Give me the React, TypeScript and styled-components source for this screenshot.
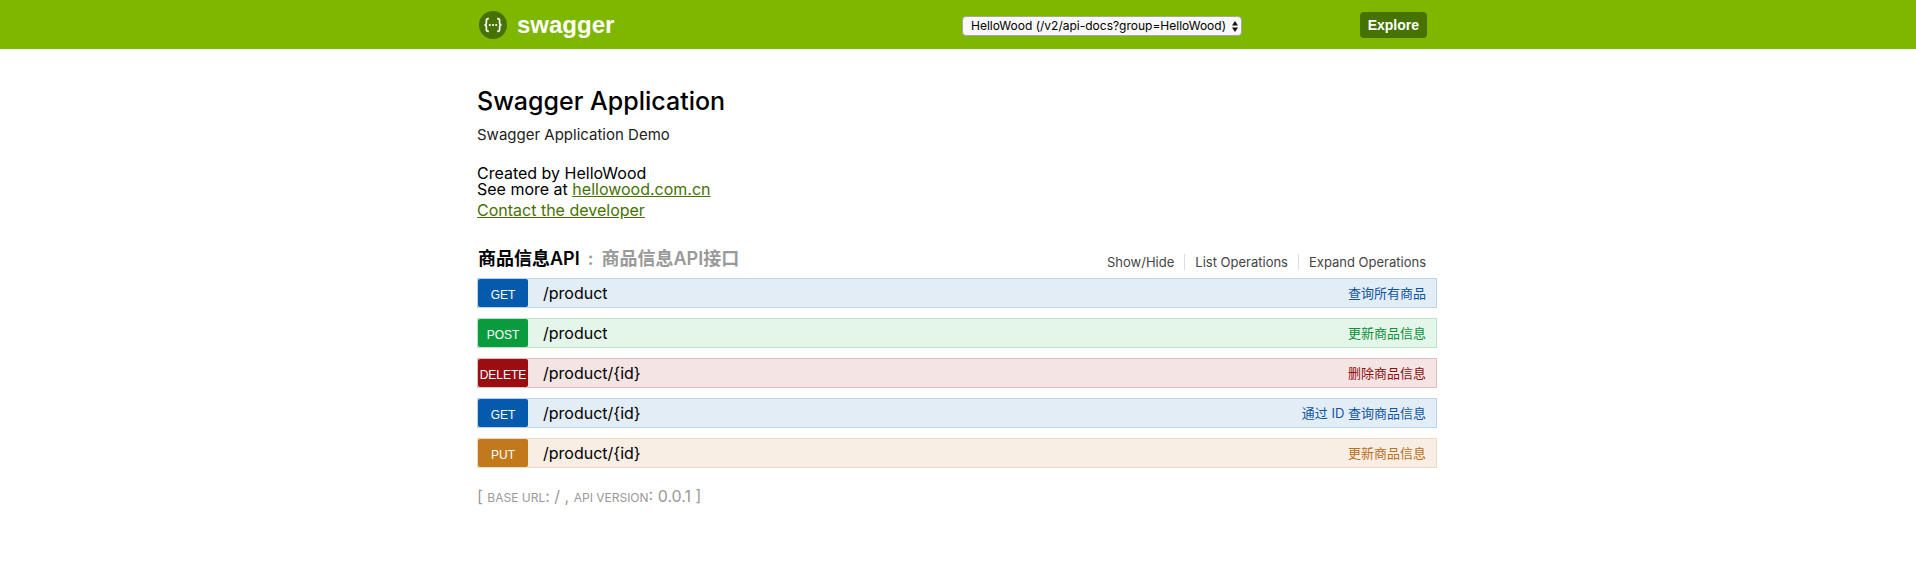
import React from "react";
import styled, { createGlobalStyle } from "styled-components";

const sans = `Inter, "Noto Sans CJK SC", sans-serif`;
const bold = `"Liberation Sans", Arial, sans-serif`;

const GlobalStyle = createGlobalStyle`
  *, *::before, *::after { box-sizing: border-box; }
  body { margin: 0; background: #fff; color: #000; font-family: ${sans}; font-size: 16px; }
  h1, h2, p, ul { margin: 0; padding: 0; }
`;

const Container = styled.div`
  max-width: 962px;
  margin: 0 auto;
  padding-right: 2px;
`;

const Header = styled.header`
  background: #7db700;
`;

const Bar = styled(Container)`
  display: flex;
  align-items: center;
  height: 49px;
`;

const Logo = styled.a`
  display: flex;
  align-items: center;
  gap: 10px;
  padding-left: 2px;
  color: #fff;
  font: bold 24px/28px ${bold};
  text-decoration: none;
`;

const Selector = styled.form`
  display: flex;
  align-items: center;
  justify-content: space-between;
  width: 465px;
  margin-left: auto;
  margin-right: 10px;
`;

const Picker = styled.label`
  position: relative;
  display: block;
  padding-top: 2px;
  svg { position: absolute; right: 4px; top: 7px; pointer-events: none; }
`;

const Select = styled.select`
  display: block;
  appearance: none;
  width: 280px;
  height: 20px;
  padding: 0 8px;
  border: 1px solid #a6a6a6;
  border-radius: 4px;
  background: #f8f8f8;
  color: #000;
  font: 12px/18px ${sans};
`;

const Explore = styled.button`
  height: 26px;
  padding: 0 8px;
  border: 0;
  border-radius: 4px;
  background: #457200;
  color: #fff;
  font: bold 14px/26px ${bold};
`;

const Info = styled.section`
  padding-top: 37px;
`;

const Title = styled.h1`
  font-size: 25px;
  font-weight: 500;
  line-height: 30px;
`;

const Description = styled.p`
  margin-top: 9px;
  color: #222;
  font-size: 15px;
  line-height: 20px;
`;

const Credits = styled.div`
  margin-top: 20px;
  line-height: 16px;
`;

const Link = styled.a`
  color: #457200;
`;

const Contact = styled.p`
  margin-top: 5px;
`;

const ResourceHead = styled.div`
  display: flex;
  align-items: flex-end;
  justify-content: space-between;
  margin-top: 30px;
  padding: 0 11px 8px 1px;
`;

const ResourceTitle = styled.h2`
  display: flex;
  gap: 8px;
  font-size: 18px;
  font-weight: 600;
  line-height: 22px;
  span { color: #999; }
`;

const Options = styled.ul`
  display: flex;
  list-style: none;
  line-height: 16px;
`;

const Option = styled.li`
  padding: 0 10px;
  border-right: 1px solid #ddd;
  &:last-child { padding-right: 0; border-right: 0; }
  a { color: #444; font-size: 13px; text-decoration: none; display: block; }
`;

const Operations = styled.ul`
  display: grid;
  gap: 10px;
  list-style: none;
`;

type Tone = { main: string; text: string; bg: string; line: string };

const tones: Record<string, Tone> = {
  GET: { main: "#065aad", text: "#0f54a4", bg: "#e3edf6", line: "#b9d4ec" },
  POST: { main: "#0a9c3c", text: "#0d8f38", bg: "#e4f5e9", line: "#b8e4c7" },
  DELETE: { main: "#9a0d10", text: "#8f0d10", bg: "#f4e4e4", line: "#e5bcbd" },
  PUT: { main: "#c1791c", text: "#ba701c", bg: "#f8eee4", line: "#f0d9bf" },
};

const Operation = styled.li<{ $tone: Tone }>`
  display: flex;
  align-items: center;
  height: 30px;
  padding-right: 10px;
  border: 1px solid ${(p) => p.$tone.line};
  background: ${(p) => p.$tone.bg};
`;

const Method = styled.a<{ $tone: Tone }>`
  width: 50px;
  height: 28px;
  margin-right: 15px;
  padding-top: 2px;
  border-radius: 2px;
  background: ${(p) => p.$tone.main};
  color: #fff;
  font: 12px/28px ${bold};
  text-align: center;
  text-decoration: none;
`;

const Path = styled.a`
  flex: 1;
  color: #000;
  line-height: 28px;
  text-decoration: none;
`;

const Summary = styled.a<{ $tone: Tone }>`
  padding-bottom: 2px;
  color: ${(p) => p.$tone.text};
  font-size: 13px;
  text-decoration: none;
`;

const Footer = styled.footer`
  padding: 18px 0 40px;
  color: #999;
  line-height: 20px;
  span { font-size: 12px; text-transform: uppercase; }
`;

const operations = [
  { method: "GET", path: "/product", summary: "查询所有商品" },
  { method: "POST", path: "/product", summary: "更新商品信息" },
  { method: "DELETE", path: "/product/{id}", summary: "删除商品信息" },
  { method: "GET", path: "/product/{id}", summary: "通过 ID 查询商品信息" },
  { method: "PUT", path: "/product/{id}", summary: "更新商品信息" },
];

function SwaggerMark() {
  return (
    <svg width="28" height="28" viewBox="0 0 28 28" aria-hidden="true">
      <circle cx="14" cy="14" r="14" fill="#457200" />
      <g fill="none" stroke="#fff" strokeWidth="1.7">
        <path d="M9.8 7.7h-.6c-1.3 0-1.8.6-1.8 1.8v2.2c0 1.4-.5 2.2-1.9 2.3 1.4.1 1.9.9 1.9 2.3v2.2c0 1.2.5 1.8 1.8 1.8h.6" />
        <path d="M18.2 7.7h.6c1.3 0 1.8.6 1.8 1.8v2.2c0 1.4.5 2.2 1.9 2.3-1.4.1-1.9.9-1.9 2.3v2.2c0 1.2-.5 1.8-1.8 1.8h-.6" />
      </g>
      <g fill="#fff">
        <circle cx="10.8" cy="14" r="1.1" />
        <circle cx="14" cy="14" r="1.1" />
        <circle cx="17.2" cy="14" r="1.1" />
      </g>
    </svg>
  );
}

export default function App() {
  return (
    <>
      <GlobalStyle />
      <Header>
        <Bar>
          <Logo href="#swagger">
            <SwaggerMark />
            swagger
          </Logo>
          <Selector onSubmit={(e) => e.preventDefault()}>
            <Picker>
              <Select aria-label="API group">
                <option>HelloWood (/v2/api-docs?group=HelloWood)</option>
              </Select>
              <svg width="6" height="11" viewBox="0 0 6 11" aria-hidden="true">
                <path d="M3 0l3 4.5H0zM3 11l3-4.5H0z" fill="#111" />
              </svg>
            </Picker>
            <Explore type="submit">Explore</Explore>
          </Selector>
        </Bar>
      </Header>
      <Container as="main">
        <Info>
          <Title>Swagger Application</Title>
          <Description>Swagger Application Demo</Description>
          <Credits>
            <p>Created by HelloWood</p>
            <p>
              See more at <Link href="#site">hellowood.com.cn</Link>
            </p>
            <Contact>
              <Link href="#contact">Contact the developer</Link>
            </Contact>
          </Credits>
        </Info>
        <ResourceHead>
          <ResourceTitle>
            商品信息API <span>:</span> <span>商品信息API接口</span>
          </ResourceTitle>
          <Options>
            {["Show/Hide", "List Operations", "Expand Operations"].map((label) => (
              <Option key={label}>
                <a href="#resource">{label}</a>
              </Option>
            ))}
          </Options>
        </ResourceHead>
        <Operations>
          {operations.map((op, i) => {
            const tone = tones[op.method];
            return (
              <Operation key={i} $tone={tone}>
                <Method href="#operation" $tone={tone}>{op.method}</Method>
                <Path href="#operation">{op.path}</Path>
                <Summary href="#operation" $tone={tone}>{op.summary}</Summary>
              </Operation>
            );
          })}
        </Operations>
        <Footer>
          [ <span>base url</span>: / , <span>api version</span>: 0.0.1 ]
        </Footer>
      </Container>
    </>
  );
}
